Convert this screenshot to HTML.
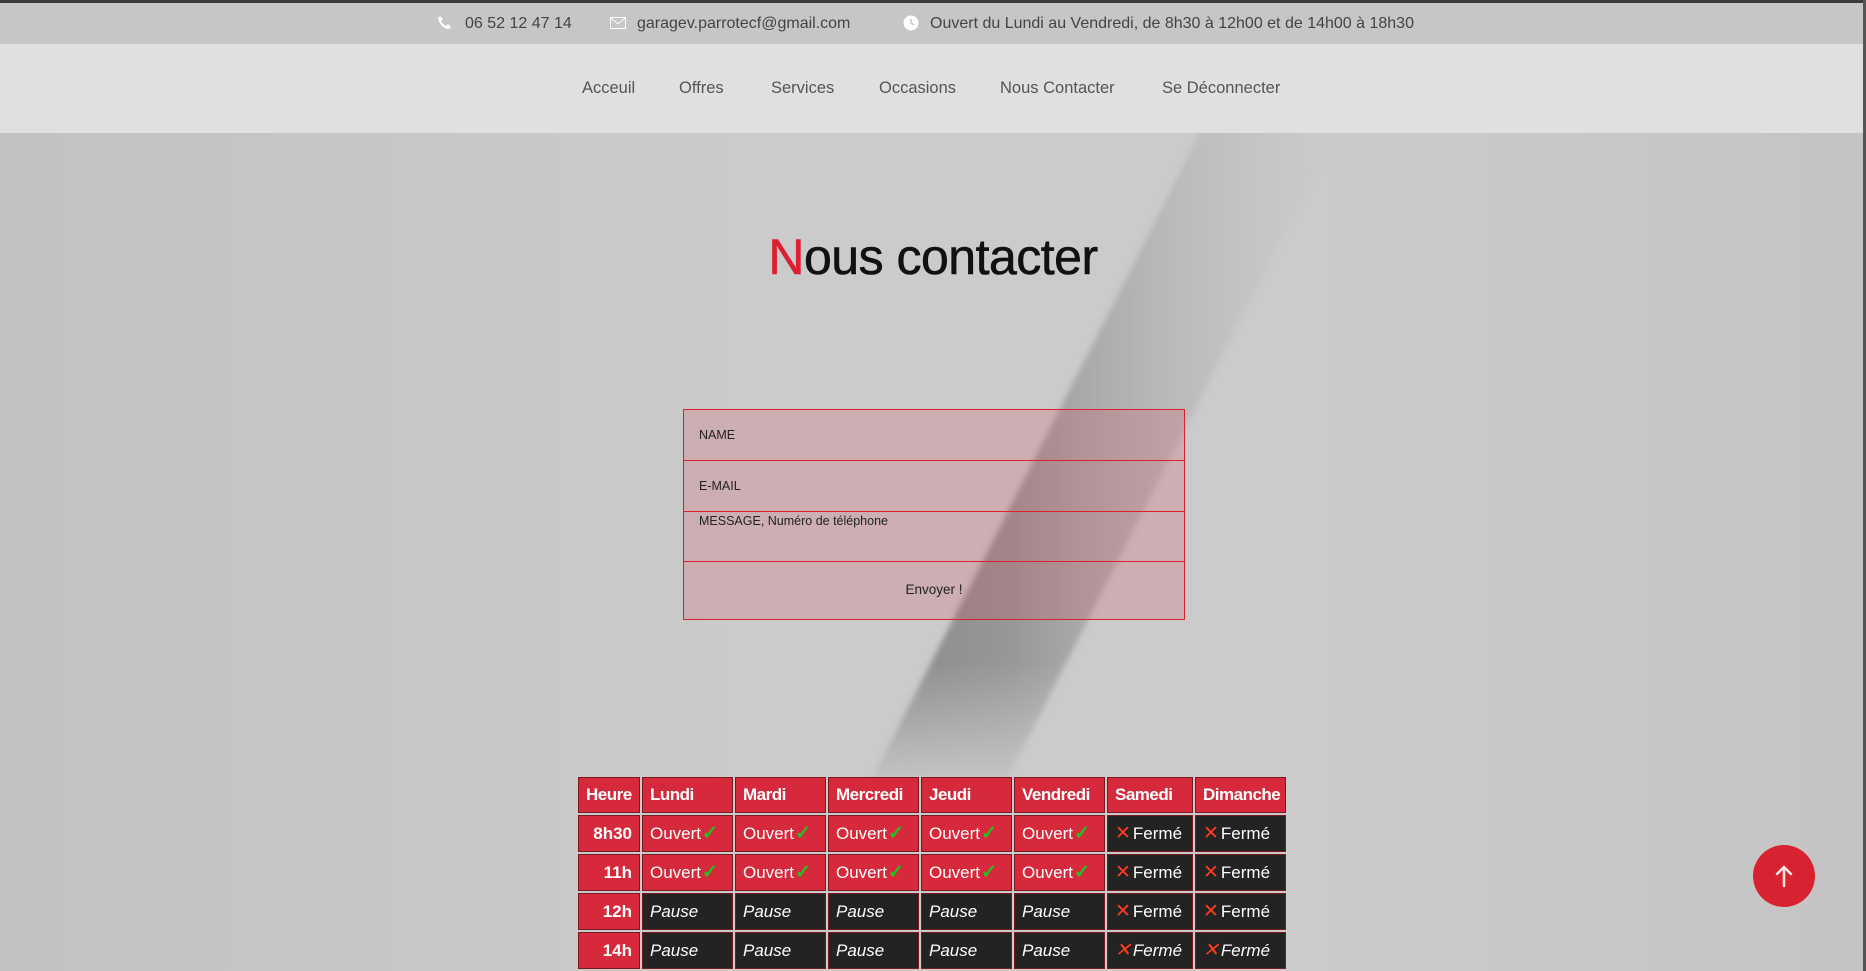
<!DOCTYPE html>
<html><head><meta charset="utf-8"><style>
*{margin:0;padding:0;box-sizing:border-box}
html,body{width:1866px;height:971px;overflow:hidden;font-family:"Liberation Sans",sans-serif}
body{background:#c6c6c6;position:relative}
.topline{position:absolute;left:0;top:0;width:1866px;height:3px;background:#3a3a3a}
.topbar{position:absolute;left:0;top:3px;width:1866px;height:41px;background:#c6c6c6;color:#444;font-size:16px}
.topbar span{position:absolute;top:12px;white-space:nowrap}
.nav{position:absolute;left:0;top:44px;width:1866px;height:89px;background:#e0e0e0;color:#555;font-size:16.5px}
.nav span{position:absolute;top:35px;white-space:nowrap}
.main{position:absolute;left:0;top:133px;width:1866px;height:838px;background:linear-gradient(90deg,#c2c2c2 0%,#cbcbcb 40%,#cbcbcb 70%,#c4c4c4 100%)}
h1{position:absolute;left:0;width:1866px;top:228px;text-align:center;font-size:50px;font-weight:normal;color:#111;letter-spacing:-0.5px;-webkit-text-stroke:0.6px #111}
h1 b{color:#de1f32;font-weight:normal;-webkit-text-stroke:0.6px #de1f32}
.form{position:absolute;left:683px;top:409px;width:502px;height:211px;border:1px solid #d9222e;background:rgba(215,60,85,0.2)}
.row{position:absolute;left:0;width:500px;border-bottom:1px solid #d9222e;font-size:12.5px;color:#222}
.tbl{position:absolute;left:576px;top:775px;border-collapse:separate;border-spacing:2px;font-size:17px;color:#fff;table-layout:fixed;width:712px}
.tbl td{border:1px solid #7a1a20;height:37px;padding:0 7px;white-space:nowrap;overflow:hidden}
.tbl tr:first-child td{height:36px;font-weight:bold;letter-spacing:-0.5px}
.r{background:#d62a3c}
.d{background:#232323}
.h{text-align:right;font-weight:bold}
.ck{color:#22c122;font-weight:bold;font-size:19px;margin-left:1px}
.x{color:#ff3b1c;font-size:19px;margin-right:2px}
i{font-style:italic}
.up{position:absolute;left:1753px;top:845px;width:62px;height:62px;border-radius:50%;background:#d9222f}
.sb{position:absolute;right:0;top:0;width:3px;height:971px;background:#555}
</style></head><body>
<div class="main">
<svg width="1866" height="838" style="position:absolute;left:0;top:0">
<defs><linearGradient id="g" x1="0" y1="0" x2="1" y2="0"><stop offset="0" stop-color="#888" stop-opacity="1"/><stop offset="0.3" stop-color="#8e8e8e" stop-opacity="0.85"/><stop offset="1" stop-color="#bbb" stop-opacity="0"/></linearGradient>
<filter id="b"><feGaussianBlur stdDeviation="3"/></filter>
<linearGradient id="m" x1="0" y1="0" x2="0" y2="1"><stop offset="0.8" stop-color="#fff"/><stop offset="1" stop-color="#000"/></linearGradient>
<mask id="mk"><rect width="1866" height="660" fill="url(#m)"/></mask></defs>
<g mask="url(#mk)"><polygon points="1205,-10 1340,-10 1005,650 870,650" fill="url(#g)" filter="url(#b)"/></g>
</svg>
</div>
<div class="topline"></div>
<div class="topbar">
<svg style="position:absolute;left:437px;top:12px" width="16" height="16" viewBox="0 0 16 16"><path d="M3 1l3 3-2 2c1 2 3 4 5 5l2-2 3 3-2 2C7 14 2 9 1 3z" fill="#fff"/></svg>
<span style="left:465px">06 52 12 47 14</span>
<svg style="position:absolute;left:610px;top:14px" width="16" height="12" viewBox="0 0 16 12"><rect x="0.5" y="0.5" width="15" height="11" fill="none" stroke="#fff"/><path d="M1 1l7 6 7-6" fill="none" stroke="#fff"/></svg>
<span style="left:637px">garagev.parrotecf@gmail.com</span>
<svg style="position:absolute;left:903px;top:12px" width="16" height="16" viewBox="0 0 16 16"><circle cx="8" cy="8" r="7.5" fill="#fff"/><path d="M8 4v4l3 2" stroke="#c6c6c6" stroke-width="1.5" fill="none"/></svg>
<span style="left:930px">Ouvert du Lundi au Vendredi, de 8h30 à 12h00 et de 14h00 à 18h30</span>
</div>
<div class="nav">
<span style="left:582px">Acceuil</span><span style="left:679px">Offres</span><span style="left:771px">Services</span><span style="left:879px">Occasions</span><span style="left:1000px">Nous Contacter</span><span style="left:1162px">Se Déconnecter</span>
</div>
<h1><b>N</b>ous contacter</h1>
<div class="form">
<div class="row" style="top:0;height:51px;padding:18px 15px">NAME</div>
<div class="row" style="top:51px;height:51px;padding:18px 15px">E-MAIL</div>
<div class="row" style="top:102px;height:50px;padding:2px 15px">MESSAGE, Numéro de téléphone</div>
<div style="position:absolute;left:0;top:172px;width:500px;text-align:center;font-size:13.5px;color:#222">Envoyer !</div>
</div>
<table class="tbl">
<colgroup><col style="width:62px"><col style="width:91px"><col style="width:91px"><col style="width:91px"><col style="width:91px"><col style="width:91px"><col style="width:86px"><col style="width:91px"></colgroup>
<tr><td class="r">Heure</td><td class="r">Lundi</td><td class="r">Mardi</td><td class="r">Mercredi</td><td class="r">Jeudi</td><td class="r">Vendredi</td><td class="r">Samedi</td><td class="r">Dimanche</td></tr>
<tr><td class="r h">8h30</td><td class="r">Ouvert<span class="ck">✓</span></td><td class="r">Ouvert<span class="ck">✓</span></td><td class="r">Ouvert<span class="ck">✓</span></td><td class="r">Ouvert<span class="ck">✓</span></td><td class="r">Ouvert<span class="ck">✓</span></td><td class="d"><span class="x">✕</span>Fermé</td><td class="d"><span class="x">✕</span>Fermé</td></tr>
<tr><td class="r h">11h</td><td class="r">Ouvert<span class="ck">✓</span></td><td class="r">Ouvert<span class="ck">✓</span></td><td class="r">Ouvert<span class="ck">✓</span></td><td class="r">Ouvert<span class="ck">✓</span></td><td class="r">Ouvert<span class="ck">✓</span></td><td class="d"><span class="x">✕</span>Fermé</td><td class="d"><span class="x">✕</span>Fermé</td></tr>
<tr><td class="r h">12h</td><td class="d"><i>Pause</i></td><td class="d"><i>Pause</i></td><td class="d"><i>Pause</i></td><td class="d"><i>Pause</i></td><td class="d"><i>Pause</i></td><td class="d"><span class="x">✕</span>Fermé</td><td class="d"><span class="x">✕</span>Fermé</td></tr>
<tr><td class="r h">14h</td><td class="d"><i>Pause</i></td><td class="d"><i>Pause</i></td><td class="d"><i>Pause</i></td><td class="d"><i>Pause</i></td><td class="d"><i>Pause</i></td><td class="d"><i><span class="x">✕</span>Fermé</i></td><td class="d"><i><span class="x">✕</span>Fermé</i></td></tr>
</table>
<div class="up"><svg width="62" height="62" viewBox="0 0 62 62"><path d="M31 41V22M24 29l7-7 7 7" stroke="#f2e6e6" stroke-width="2.5" fill="none" stroke-linecap="round"/></svg></div>
<div class="sb"></div>
</body></html>
